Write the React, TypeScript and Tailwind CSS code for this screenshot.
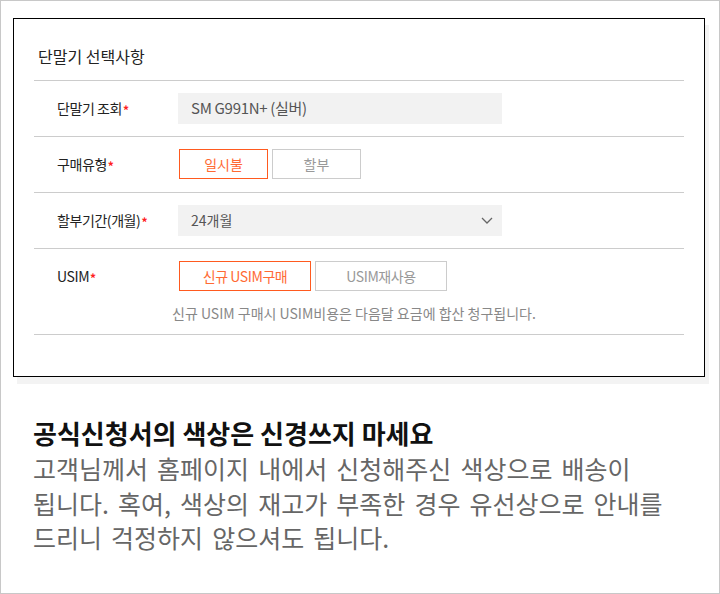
import React from "react";

const font = "font-['Noto_Sans_CJK_KR','Noto_Sans',sans-serif]";

const Star = () => <span className="text-[#ff2020] text-[12px] ml-[1px] align-middle font-bold">*</span>;

const Row = ({ label, children, h = "h-[56px]" }: { label: string; children: React.ReactNode; h?: string }) => (
  <div className={`flex ${h} border-b border-[#cccccc]`}>
    <div className="w-[144px] pl-[23px] pt-[17px] text-[14px] text-[#222] tracking-[-0.03em]">
      {label}
      <Star />
    </div>
    <div className="flex-1 pt-[12px]">{children}</div>
  </div>
);

export default function App() {
  return (
    <div className={`w-[720px] h-[594px] border border-[#c8c8c8] bg-white ${font}`}>
      <div className="ml-[12px] mt-[17px] w-[692px] h-[359px] border border-black bg-white shadow-[4px_7px_0_#f3f3f3] px-[20px]">
        <div className="h-[62px] border-b border-[#cccccc] pl-[4px] pt-[25px] text-[16px] text-[#222]">
          단말기 선택사항
        </div>
        <Row label="단말기 조회">
          <div className="w-[324px] h-[31px] bg-[#f2f2f2] pl-[13px] flex items-center text-[15px] text-[#555] tracking-[-0.02em]">
            SM G991N+ (실버)
          </div>
        </Row>
        <Row label="구매유형">
          <div className="flex gap-[4px] pl-[1px]">
            <button className="w-[89px] h-[30px] border border-[#ff5a1f] text-[#ff6a33] text-[14px]">일시불</button>
            <button className="w-[89px] h-[30px] border border-[#cccccc] text-[#999] text-[14px]">할부</button>
          </div>
        </Row>
        <Row label="할부기간(개월)">
          <div className="w-[324px] h-[31px] bg-[#f2f2f2] pl-[13px] pr-[9px] flex items-center justify-between text-[14px] text-[#555]">
            <span>24개월</span>
            <svg width="12" height="7" viewBox="0 0 12 7" fill="none" stroke="#666" strokeWidth="1.3">
              <path d="M1 1l5 5 5-5" />
            </svg>
          </div>
        </Row>
        <Row label="USIM" h="h-[86px]">
          <div className="flex gap-[4px] pl-[1px]">
            <button className="w-[132px] h-[30px] border border-[#ff5a1f] text-[#ff6a33] text-[14px] tracking-[-0.03em]">신규 USIM구매</button>
            <button className="w-[132px] h-[30px] border border-[#cccccc] text-[#999] text-[14px] tracking-[-0.03em]">USIM재사용</button>
          </div>
          <p className="mt-[12px] -ml-[6px] text-[14px] text-[#888]">
            신규 USIM 구매시 USIM비용은 다음달 요금에 합산 청구됩니다.
          </p>
        </Row>
      </div>
      <div className="pl-[32px] pt-[39px]">
        <h2 className="text-[26px] font-bold text-[#111] leading-[34px]">공식신청서의 색상은 신경쓰지 마세요</h2>
        <p className="text-[25px] text-[#666] leading-[34.5px] mt-[1px] [word-spacing:3.5px]">
          고객님께서 홈페이지 내에서 신청해주신 색상으로 배송이
          <br />
          됩니다. 혹여, 색상의 재고가 부족한 경우 유선상으로 안내를
          <br />
          드리니 걱정하지 않으셔도 됩니다.
        </p>
      </div>
    </div>
  );
}
